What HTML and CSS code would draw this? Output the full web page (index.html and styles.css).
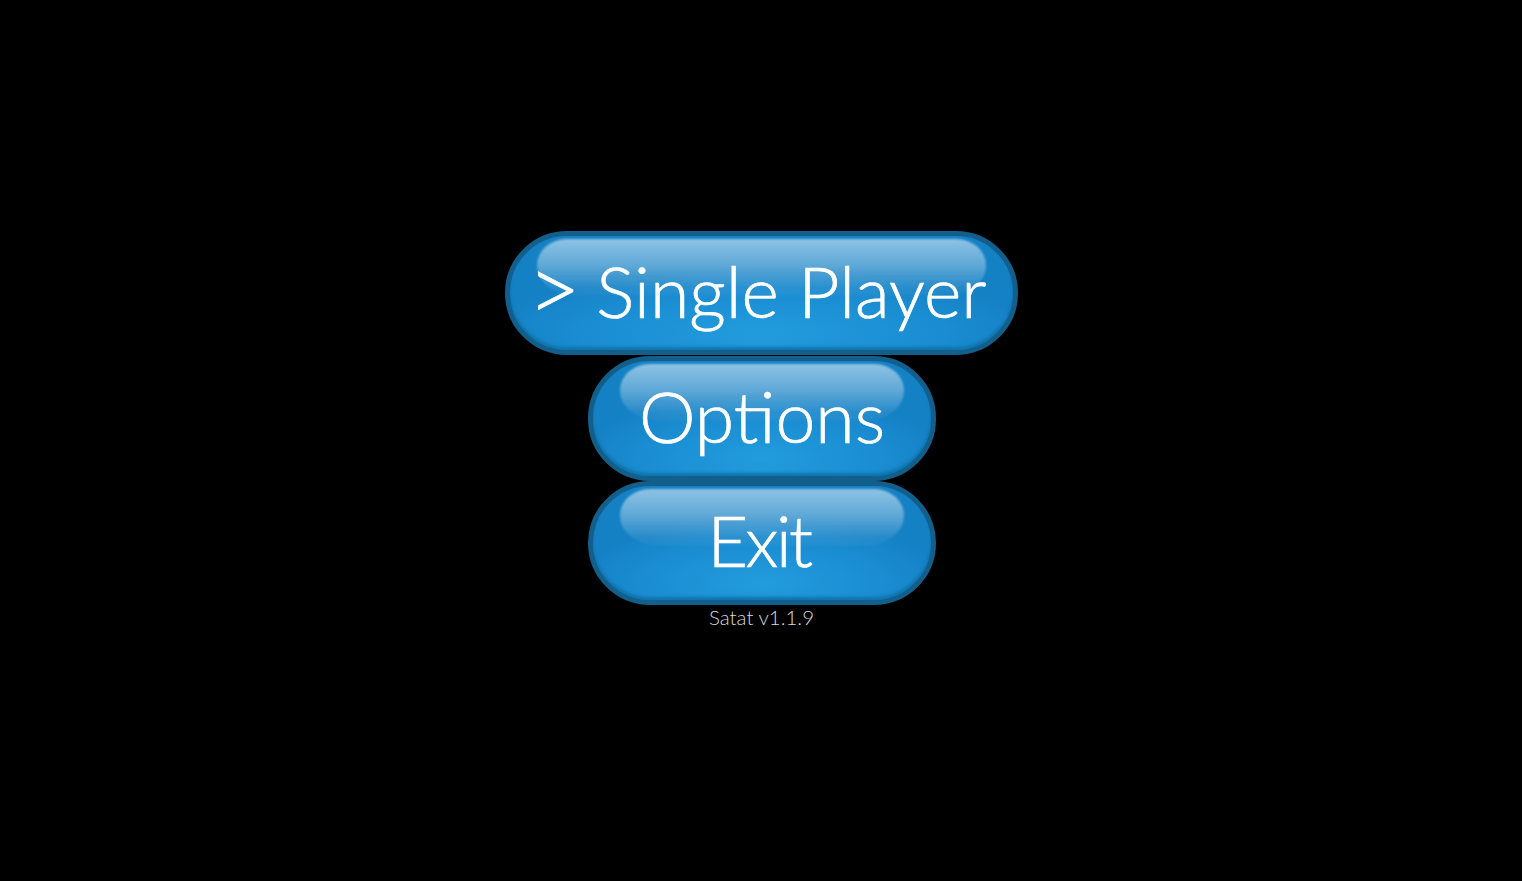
FILE: index.html
```html
<!DOCTYPE html>
<html lang="en">
<head>
    <meta charset="UTF-8">
    <meta name="viewport" content="width=device-width, initial-scale=1.0">
    <title>Satat</title>
    <link rel="stylesheet" href="styles.css">
</head>
<body>

    <!-- Main menu -->
    <div class="menu">
        <button class="menu-button wide"><span class="label player"><span class="arrow">&gt;</span> Single Player</span></button>
        <button class="menu-button"><span class="label">Options</span></button>
        <button class="menu-button"><span class="label exit">Exit</span></button>
        <div class="version">Satat v1.1.9</div>
    </div>

</body>
</html>
```

FILE: styles.css
```css
body {
    margin: 0;
    height: 100vh;
    overflow: hidden;
    background-color: #000;
    font-family: "Lato", "Liberation Sans", sans-serif;
    color: #fff;
}

.menu {
    display: flex;
    flex-direction: column;
    align-items: center;
    padding-top: 231px;
}

.menu-button {
    position: relative;
    box-sizing: border-box;
    width: 348px;
    height: 124.5px;
    margin-left: 2px;
    padding: 0 0 6px;
    border: 5px solid #125f8c;
    border-radius: 62px;
    background: radial-gradient(ellipse 55% 55% at 50% 85%, #229cdd 0%, #1b8ed3 60%, #1581c5 100%);
    box-shadow: inset 0 -3px 3px #0f74ae;
    font-family: inherit;
    color: #fff;
    overflow: hidden;
}

.menu-button.wide {
    width: 513px;
    height: 124px;
    margin-left: 0;
    margin-bottom: 1px;
}

/* glossy highlight on the top half */
.menu-button::before {
    content: "";
    position: absolute;
    top: 3px;
    left: 27px;
    right: 27px;
    height: 57px;
    border-radius: 30px 30px 40px 40px / 26px 26px 30px 30px;
    background: linear-gradient(to bottom, rgba(255, 255, 255, 0.52) 0%, rgba(255, 255, 255, 0.32) 45%, rgba(255, 255, 255, 0.08) 85%, rgba(255, 255, 255, 0.03) 100%);
    filter: blur(1px);
}

.label {
    position: relative;
    display: block;
    font-size: 71.5px;
    font-weight: 300;
    line-height: 102px;
    white-space: nowrap;
    -webkit-text-stroke: 0.7px #fff;
}

.player {
    padding-right: 8px;
}

.arrow {
    margin-right: -4px;
    font-size: 92px;
    line-height: 0;
    vertical-align: -4px;
}

.exit {
    padding-right: 6px;
    font-size: 70px;
    letter-spacing: -2.5px;
}

.version {
    margin-left: 1px;
    font-size: 20.5px;
    font-weight: 300;
    line-height: 24px;
    color: #d8d8d8;
}
```
